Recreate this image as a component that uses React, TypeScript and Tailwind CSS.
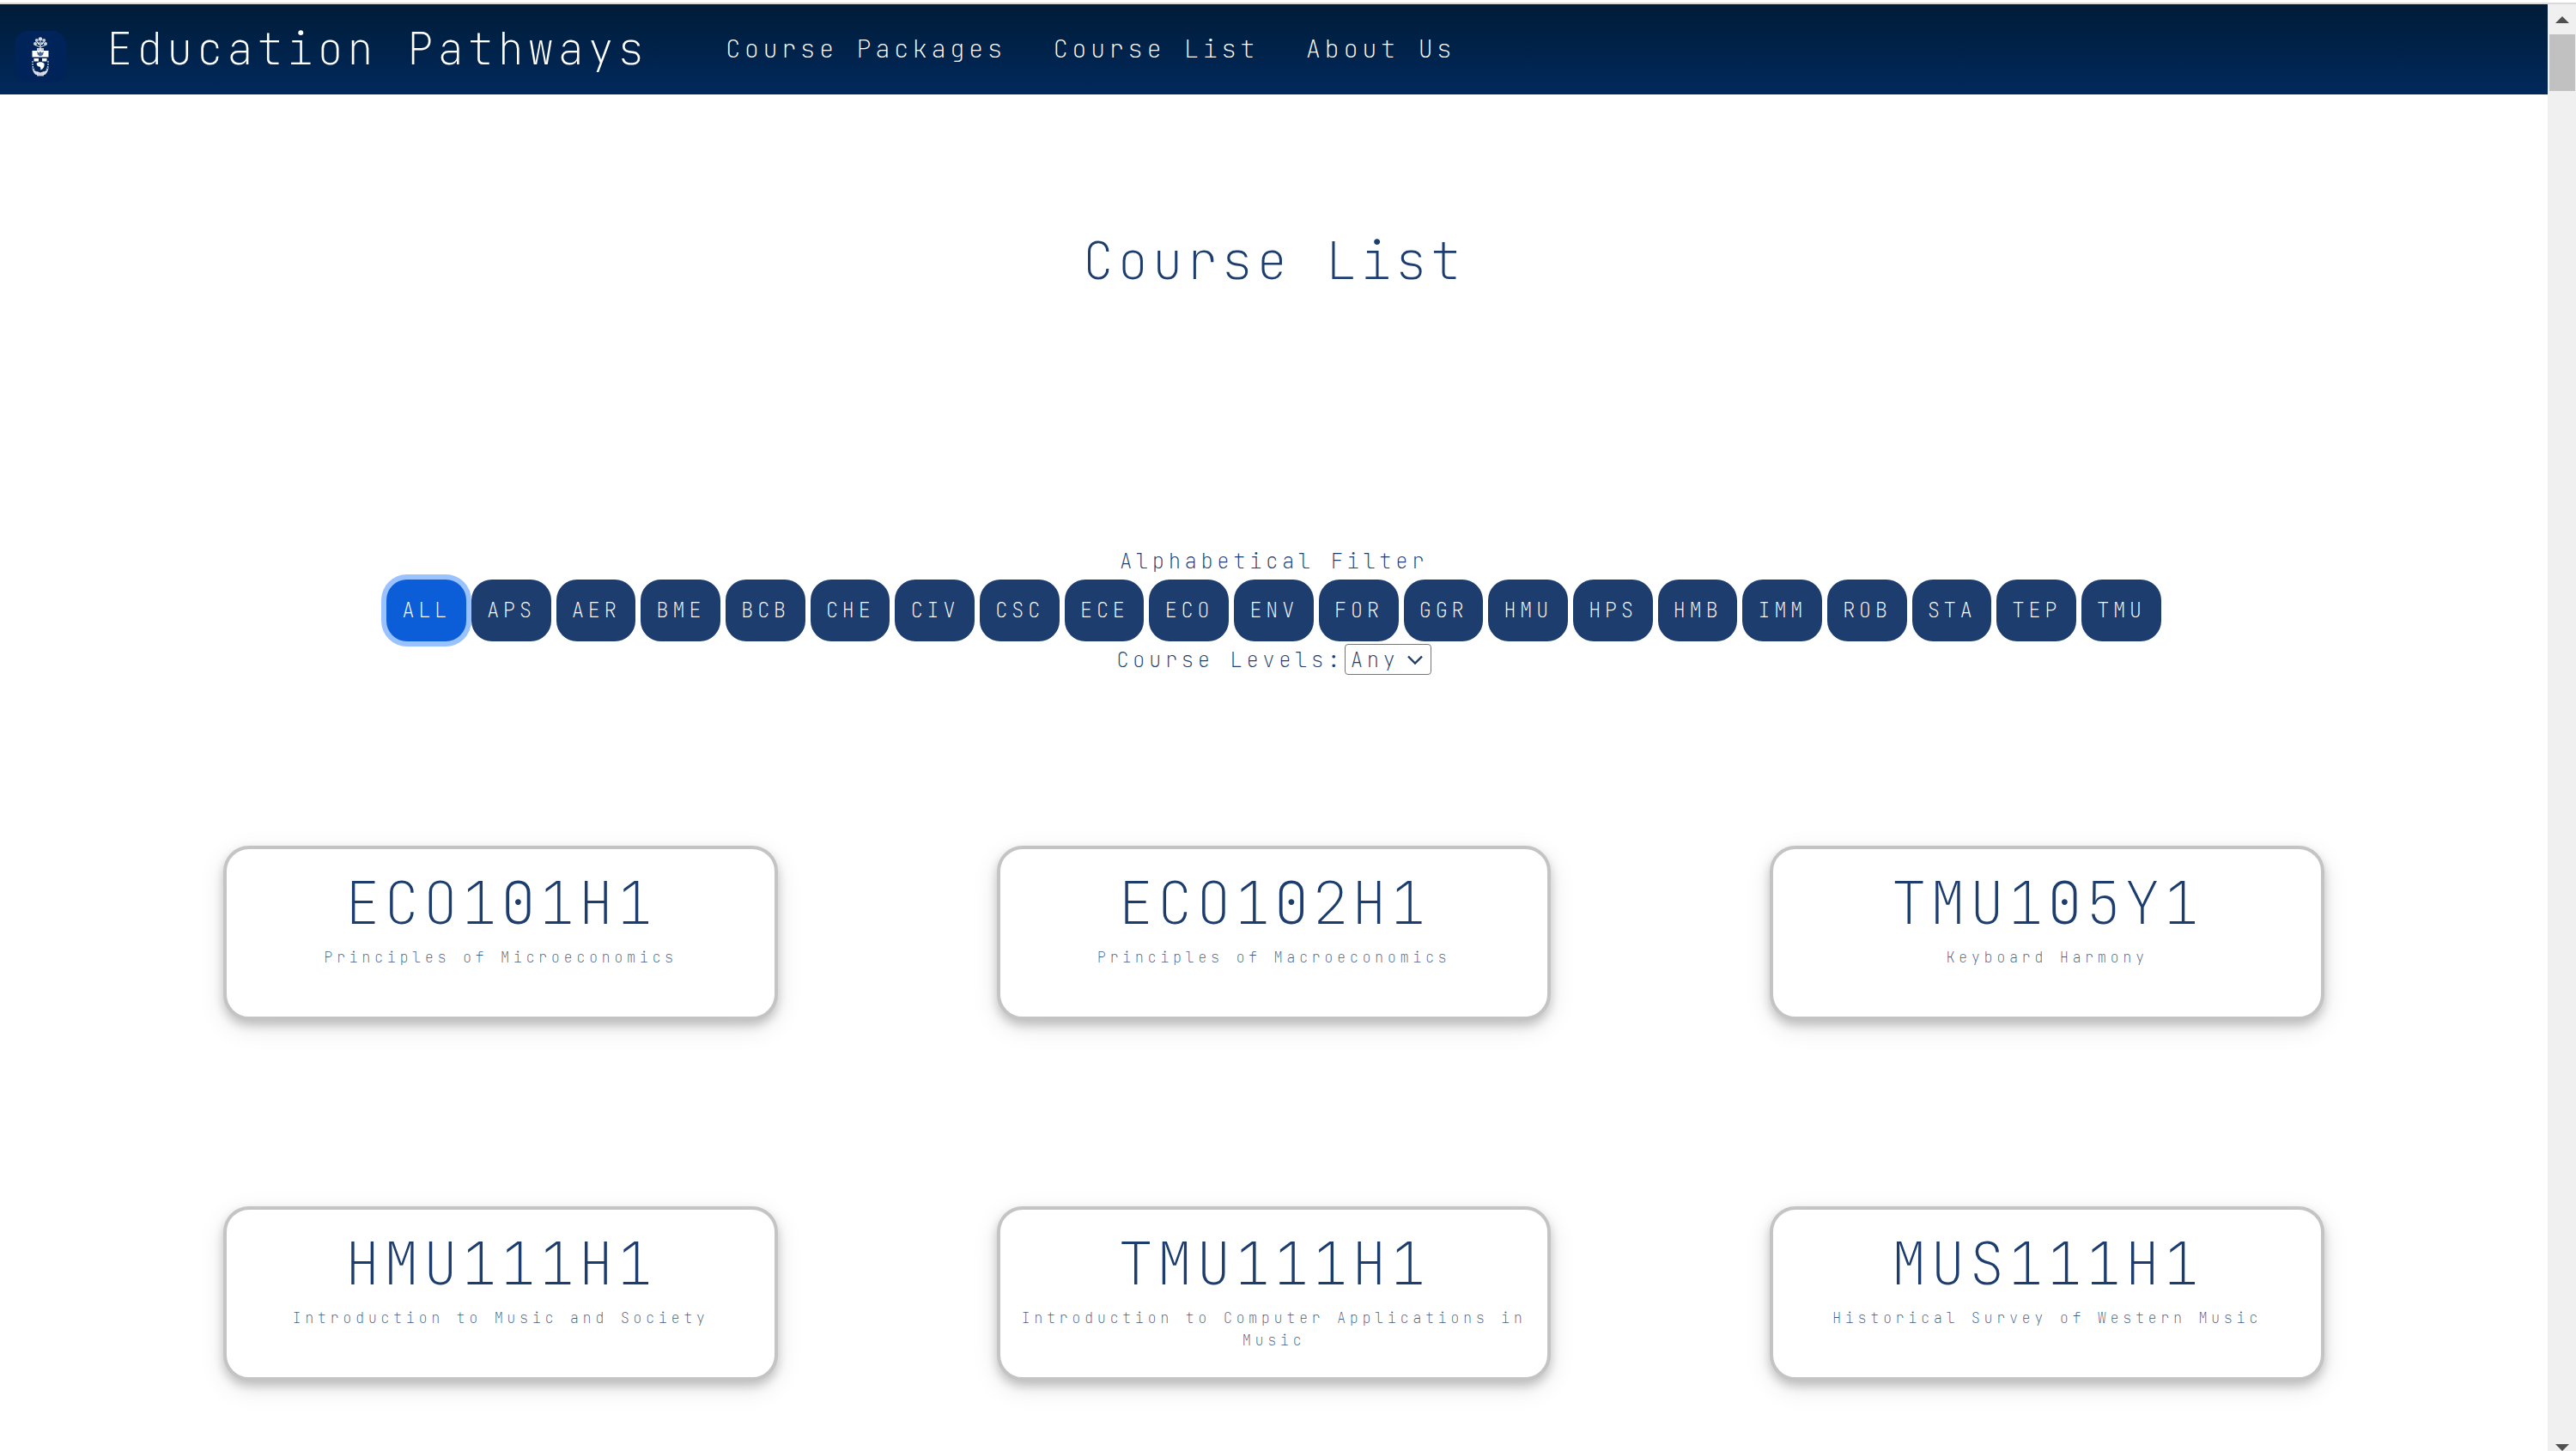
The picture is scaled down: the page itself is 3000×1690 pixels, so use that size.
import React from "react";

const filters = ["ALL", "APS", "AER", "BME", "BCB", "CHE", "CIV", "CSC", "ECE", "ECO", "ENV", "FOR", "GGR", "HMU", "HPS", "HMB", "IMM", "ROB", "STA", "TEP", "TMU"];

const courses = [
  { code: "ECO101H1", name: "Principles of Microeconomics" },
  { code: "ECO102H1", name: "Principles of Macroeconomics" },
  { code: "TMU105Y1", name: "Keyboard Harmony" },
  { code: "HMU111H1", name: "Introduction to Music and Society" },
  { code: "TMU111H1", name: "Introduction to Computer Applications in Music" },
  { code: "MUS111H1", name: "Historical Survey of Western Music" },
];

function Crest() {
  return (
    <svg viewBox="0 0 20 46" className="h-[46px] w-5" fill="#fff">
      <path d="M10 5v11M6 6l4 4 4-4M4 9.500l6 2.500 6-2.500" stroke="#dfe6f0" strokeWidth="1" fill="none" />
      <circle cx="10" cy="2.500" r="2.200" opacity=".85" />
      <circle cx="5.800" cy="4" r="2" opacity=".75" />
      <circle cx="14.200" cy="4" r="2" opacity=".75" />
      <circle cx="4" cy="8" r="2" opacity=".8" />
      <circle cx="16" cy="8" r="2" opacity=".8" />
      <circle cx="8" cy="7.500" r="1.500" opacity=".7" />
      <circle cx="12" cy="7.500" r="1.500" opacity=".7" />
      <path d="M6 13h8v3H6z" opacity=".75" />
      <path d="M.5 16h19v7.500H.5z" />
      <path d="M6 17l2.500 1.500L10 16.800l1.500 1.700L14 17l-1 4-3 1.500L7 21z" fill="#4a6494" />
      <path d="M2.500 25H8v3.500H2.500zM12 25h5.500v3.500H12z" />
      <path d="M1 28v6l2 4M19 28v6l-2 4" stroke="#fff" strokeWidth="1" fill="none" strokeDasharray="2 1" />
      <path d="M5.500 31c2-2.500 7-2.500 9 0 .5 3.500-1 6.500-4.500 7.500 1-2 0-3-1-4-1.500 0-3-.5-3.500-3.500z" />
      <path d="M.3 34c.7 3.500 2.700 5.500 5.700 6.500L7 44H4.500C2 42 .3 38 .3 34zM19.700 34c-.7 3.500-2.700 5.500-5.700 6.500L13 44h2.500c2.500-2 4.200-6 4.200-10z" opacity=".85" />
      <path d="M6 40l4 1.500L14 40v5.500H6z" opacity=".8" />
    </svg>
  );
}

function Header() {
  return (
    <header className="flex h-[105px] bg-linear-to-b from-[#001c38] to-[#00295c] text-white">
      <div className="mt-[31px] ml-[17px] flex size-[60px] items-center justify-center rounded-[16px] bg-[#00245a]">
        <Crest />
      </div>
      <a className="mt-[18px] ml-[47px] w-[632px] text-[50.900px] leading-[68px]">Education Pathways</a>
      <nav className="mt-[33px] ml-[89px] flex gap-[54.800px] text-[28.800px] leading-[38px]">
        <a>Course Packages</a>
        <a>Course List</a>
        <a>About Us</a>
      </nav>
    </header>
  );
}

function Filters() {
  return (
    <section className="flex flex-col items-center text-2xl leading-9">
      <p className="h-[39px]">Alphabetical Filter</p>
      <div className="flex gap-1.5">
        {filters.map((f, i) => (
          <button
            key={f}
            className={
              i === 0
                ? "h-[72px] w-[92.700px] rounded-[24px] bg-[#0b5ed7] text-white ring-6 ring-[#9ac2ff]"
                : "h-[72px] w-[92.700px] rounded-[24px] bg-[#1c3d6e] text-white"
            }
          >
            {f}
          </button>
        ))}
      </div>
      <div className="mt-[3px] flex h-9 items-center">
        <span className="pt-0.5">Course Levels:</span>
        <button className="ml-px flex h-9 w-[101px] items-center gap-[9px] rounded-[4px] border border-[#767676] pt-px pl-1.5 leading-8">
          Any
          <svg viewBox="0 0 18 12" className="h-3 w-[18px] shrink-0" fill="none" stroke="#1c3d6e" strokeWidth="2.400">
            <path d="M1 1.500l8 8 8-8" />
          </svg>
        </button>
      </div>
    </section>
  );
}

function CourseCard({ code, name }: { code: string; name: string }) {
  return (
    <article className="h-[203px] w-[645.400px] rounded-[30px] border-4 border-[#c4c4c4] bg-white px-5 pt-[22px] text-center shadow-[0_6px_12px_rgba(0,0,0,0.2),0_9px_30px_rgba(0,0,0,0.1)]">
      <h2 className="text-[68px] leading-[81px]">{code}</h2>
      <p className="mt-[11px] text-[17px] leading-[25.700px] text-[#1c3d6e]/85">{name}</p>
    </article>
  );
}

function Scrollbar() {
  return (
    <aside className="flex w-[33px] flex-col items-center justify-between bg-[#f0f0f0]">
      <div className="flex flex-col items-center">
        <svg viewBox="0 0 16 8" className="mt-3.5 h-2 w-4" fill="#505050">
          <path d="M8 0l8 8H0z" />
        </svg>
        <div className="mt-[13px] h-[66px] w-[30px] bg-[#c1c1c1]" />
      </div>
      <svg viewBox="0 0 16 8" className="h-2 w-4" fill="#505050">
        <path d="M0 0h16L8 8z" />
      </svg>
    </aside>
  );
}

export default function App() {
  return (
    <div className="flex h-[1690px] w-[3000px] flex-col overflow-hidden bg-white font-['JetBrains_Mono','Roboto_Mono',monospace] font-thin tracking-[4.500px] text-[#1c3d6e]">
      <div className="mt-[3px] h-0.5 shrink-0 bg-[#d9d9d9]" />
      <div className="flex min-h-0 flex-1">
        <main className="w-[2967px]">
          <Header />
          <h1 className="mt-[154px] text-center text-[60px] leading-[80px]">Course List</h1>
          <div className="mt-[292px]">
            <Filters />
          </div>
          <div className="mt-[199px] grid grid-cols-[900.500px_900.500px_900.500px] justify-center justify-items-center gap-y-[217px]">
            {courses.map((c) => (
              <CourseCard key={c.code} code={c.code} name={c.name} />
            ))}
          </div>
        </main>
        <Scrollbar />
      </div>
    </div>
  );
}
